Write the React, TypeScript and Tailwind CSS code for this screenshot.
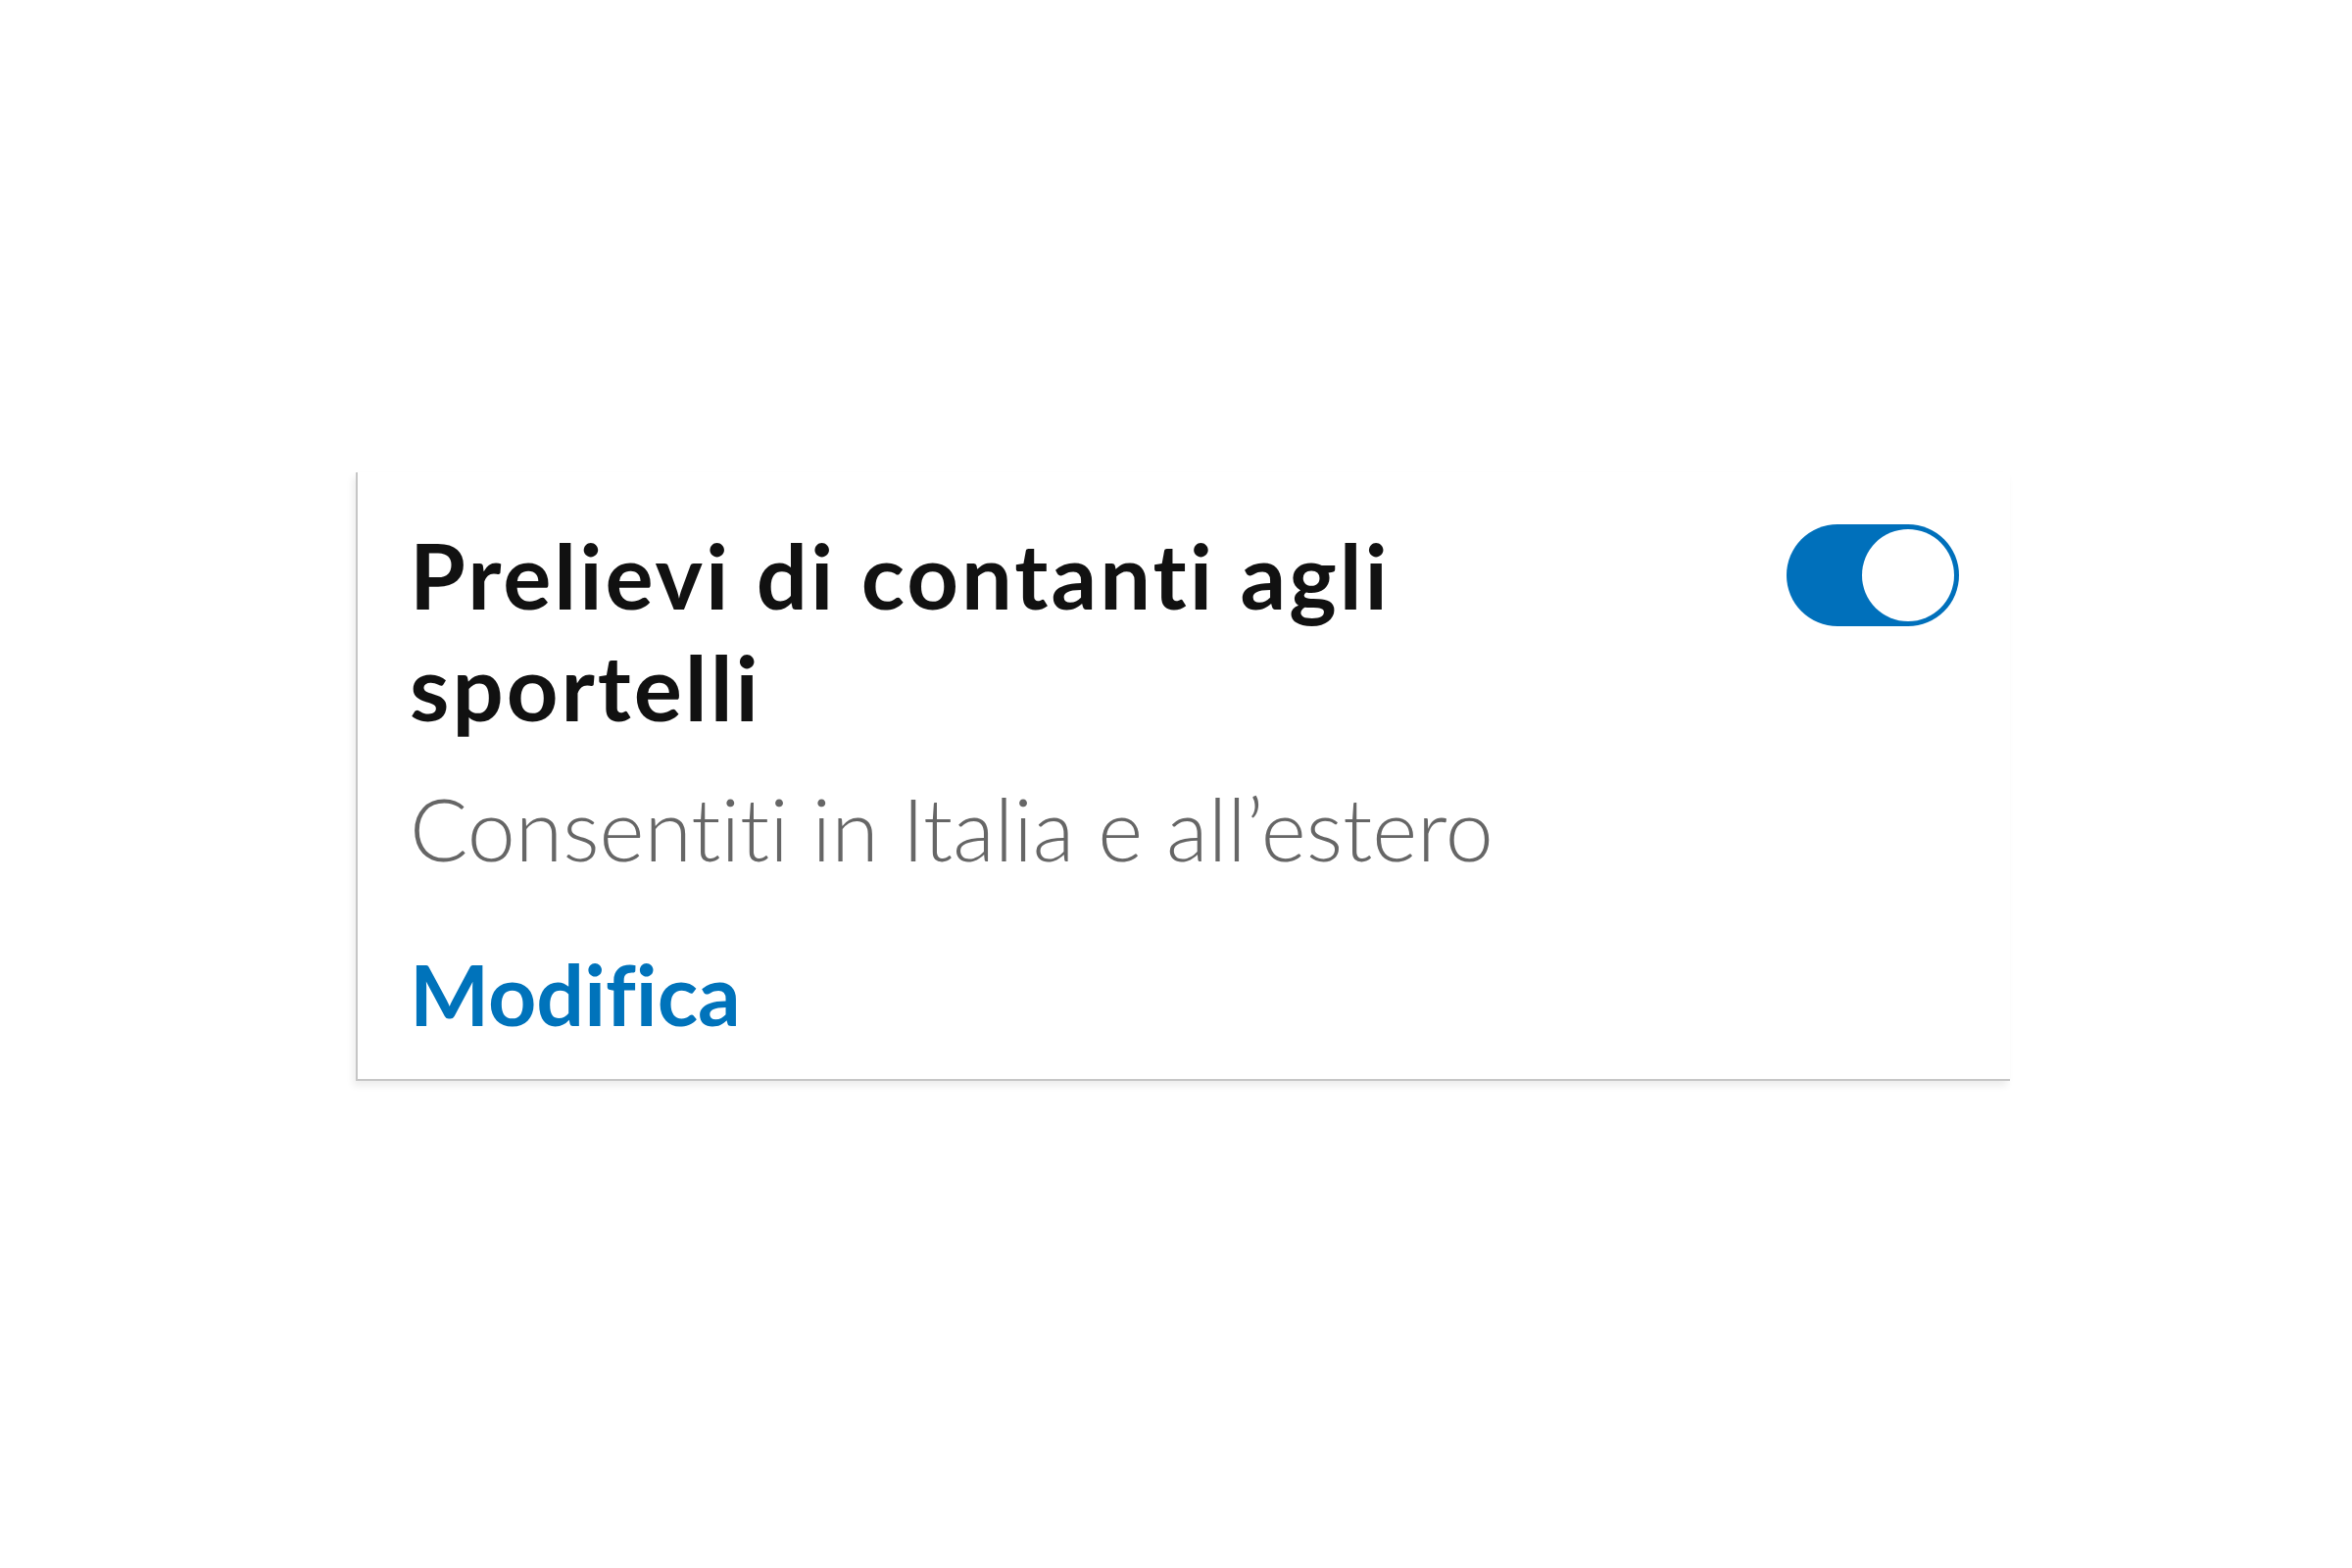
import React from 'react';

const Toggle: React.FC<{ on: boolean }> = ({ on }) => (
  <div
    className={`mt-[5px] flex h-[104px] w-[176px] shrink-0 items-center rounded-full p-[5px] ${
      on ? 'justify-end bg-[#0070bb]' : 'justify-start bg-[#c4c4c4]'
    }`}
  >
    <div className="h-[94px] w-[94px] rounded-full bg-white" />
  </div>
);

export default function App() {
  return (
    <div className="min-h-screen w-full bg-white pt-[482px] pl-[363px] font-['Lato','Liberation_Sans',sans-serif] [font-variant-ligatures:none]">
      <div className="w-[1688px] border-b-2 border-l-2 border-[#c6c6c6] bg-white pt-[48px] pr-[52px] pb-[36px] pl-[53px] shadow-[-3px_5px_7px_rgba(0,0,0,0.07)]">
        <div className="flex items-start justify-between">
          <h2 className="max-w-[1150px] text-[92px] leading-[114px] font-bold tracking-[3px] text-[#111111]">
            Prelievi di contanti agli sportelli
          </h2>
          <Toggle on />
        </div>
        <p className="mt-[35px] text-[88px] leading-[1.2] font-light text-[#666666]">
          Consentiti in Italia e all’estero
        </p>
        <a href="#" className="mt-[63px] block text-[86px] leading-[1.2] font-bold text-[#0073bb]">
          Modifica
        </a>
      </div>
    </div>
  );
}
